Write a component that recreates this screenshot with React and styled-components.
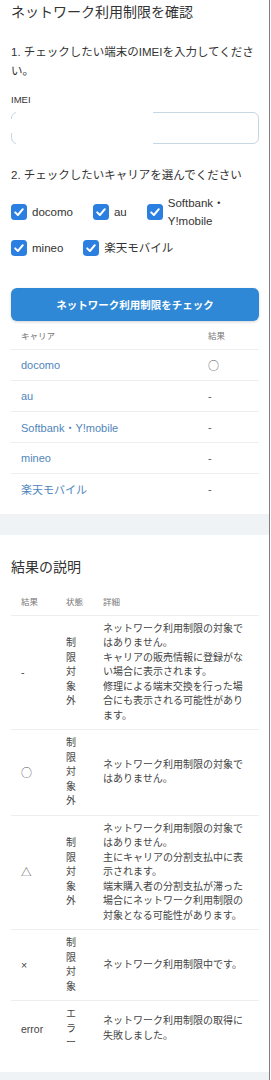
import React from 'react';
import styled, { createGlobalStyle } from 'styled-components';

const GlobalStyle = createGlobalStyle`
  html, body { margin: 0; padding: 0; background: #fff; }
  body {
    font-family: "Liberation Sans", "Noto Sans CJK JP", sans-serif;
    color: #333;
  }
  * { box-sizing: border-box; }
`;

const Page = styled.div`
  width: 270px;
  min-height: 1080px;
  border-right: 1px solid #7f7f7f;
  background: #f0f3f5;
  display: flex;
  flex-direction: column;
  gap: 21px;
`;

const Card = styled.section`
  background: #fff;
  padding: ${(p) => p.$top}px 10px ${(p) => p.$bottom}px 11px;
`;

const Title = styled.h2`
  margin: 0;
  font-size: 14px;
  line-height: 20px;
  font-weight: 400;
  color: #333;
`;

const Prompt = styled.p`
  margin: ${(p) => p.$mt}px 0 0;
  font-size: 11.5px;
  line-height: 19px;
  color: #333;
`;

const FieldLabel = styled.label`
  display: block;
  margin-top: 12px;
  font-size: 9.5px;
  line-height: 14px;
  color: #333;
`;

const InputWrap = styled.div`
  position: relative;
  margin-top: 5px;
  height: 32px;
`;

const TextInput = styled.input`
  display: block;
  width: 100%;
  height: 32px;
  border: 1px solid #c8d5e2;
  border-radius: 6px;
  background: #fff;
  padding: 0 10px;
  font: inherit;
  outline: none;
`;

const EdgeMask = styled.span`
  position: absolute;
  background: #fff;
  pointer-events: none;
  ${(p) => p.$edge === 'side'
    ? 'left: -1px; top: 7px; width: 3px; height: 14px;'
    : 'left: 5px; top: -1px; width: 137px; height: 34px;'}
`;

const CarrierGroup = styled.div`
  display: flex;
  flex-wrap: wrap;
  align-items: center;
  column-gap: 20px;
  row-gap: 9px;
  margin-top: 9px;
`;

const Option = styled.label`
  display: flex;
  align-items: center;
  gap: 5px;
  font-size: 11.5px;
  line-height: 18px;
  color: #333;
  max-width: ${(p) => (p.$narrow ? '104px' : 'none')};
`;

const Box = styled.svg`
  flex: 0 0 16px;
  width: 16px;
  height: 16px;
`;

const CheckButton = styled.button`
  display: block;
  width: 100%;
  height: 33px;
  margin-top: 31px;
  border: none;
  border-radius: 6px;
  background: #2e88d5;
  color: #fff;
  font-family: inherit;
  font-size: 10.5px;
  font-weight: 700;
  box-shadow: 0 1px 3px rgba(0, 0, 0, 0.18);
`;

const Table = styled.table`
  width: 100%;
  border-collapse: collapse;
  table-layout: fixed;
  margin-top: ${(p) => p.$mt || 0}px;
`;

const Th = styled.th`
  height: 28px;
  padding: 0 10px;
  text-align: left;
  font-size: 8.5px;
  font-weight: 400;
  color: #777;
  border-bottom: 1px solid #eee;
  width: ${(p) => (p.$w ? `${p.$w}px` : 'auto')};
`;

const CarrierRow = styled.tr`
  & + & td { border-top: 1px solid #eee; }
`;

const Td = styled.td`
  height: 31px;
  padding: 0 10px;
  font-size: 11px;
  color: ${(p) => (p.$link ? '#4f86bd' : '#555')};
  white-space: nowrap;
`;

const Symbol = styled.span`
  font-family: "Noto Sans CJK JP", sans-serif;
  font-size: ${(p) => p.$size || 11}px;
  color: #555;
`;

const LegendRow = styled.tr`
  & + & td { border-top: 1px solid #eee; }
`;

const LegendCell = styled.td`
  padding: 6px ${(p) => (p.$kind === 'detail' ? 12 : 10)}px 6px 10px;
  vertical-align: middle;
  font-size: ${(p) => (p.$kind === 'result' ? '10.5px' : '10px')};
  line-height: 14.5px;
  color: #444;
  ${(p) => p.$kind === 'status' ? 'line-break: anywhere; word-break: break-all;' : ''}
`;

const CheckIcon = () => (
  <Box viewBox="0 0 16 16" aria-hidden="true">
    <rect x="0" y="0" width="16" height="16" rx="3.5" fill="#2b7fe0" />
    <path d="M4.2 8.4 L6.9 11 L11.8 5.2" fill="none" stroke="#fff" strokeWidth="2" strokeLinecap="round" strokeLinejoin="round" />
  </Box>
);

const carriers = [
  { name: 'docomo', result: '○' },
  { name: 'au', result: '-' },
  { name: 'Softbank・Y!mobile', result: '-' },
  { name: 'mineo', result: '-' },
  { name: '楽天モバイル', result: '-' },
];

const legend = [
  { mark: '-', status: '制限対象外', detail: 'ネットワーク利用制限の対象ではありません。キャリアの販売情報に登録がない場合に表示されます。修理による端末交換を行った場合にも表示される可能性があります。' },
  { mark: '○', status: '制限対象外', detail: 'ネットワーク利用制限の対象ではありません。' },
  { mark: '△', status: '制限対象外', detail: 'ネットワーク利用制限の対象ではありません。主にキャリアの分割支払中に表示されます。端末購入者の分割支払が滞った場合にネットワーク利用制限の対象となる可能性があります。' },
  { mark: '×', status: '制限対象', detail: 'ネットワーク利用制限中です。' },
  { mark: 'error', status: 'エラー', detail: 'ネットワーク利用制限の取得に失敗しました。' },
];

const renderDetail = (text) => {
  const parts = text.split('。').filter(Boolean);
  return parts.map((s, i) => (
    <React.Fragment key={i}>
      {s}。{i < parts.length - 1 && <br />}
    </React.Fragment>
  ));
};

const renderMark = (mark) => {
  if (mark === '○') return <Symbol $size={11}>○</Symbol>;
  if (mark === '△') return <Symbol $size={10.5}>△</Symbol>;
  return mark;
};

export default function App() {
  return (
    <>
      <GlobalStyle />
      <Page>
        <Card $top={2} $bottom={10}>
          <Title>ネットワーク利用制限を確認</Title>
          <Prompt $mt={21}>1. チェックしたい端末のIMEIを入力してください。</Prompt>
          <FieldLabel htmlFor="imei">IMEI</FieldLabel>
          <InputWrap>
            <TextInput id="imei" type="text" />
            <EdgeMask />
            <EdgeMask $edge="side" />
          </InputWrap>
          <Prompt $mt={22}>2. チェックしたいキャリアを選んでください</Prompt>
          <CarrierGroup>
            <Option><CheckIcon />docomo</Option>
            <Option><CheckIcon />au</Option>
            <Option $narrow><CheckIcon /><span>Softbank・<wbr />Y!mobile</span></Option>
            <Option><CheckIcon />mineo</Option>
            <Option><CheckIcon />楽天モバイル</Option>
          </CarrierGroup>
          <CheckButton type="button">ネットワーク利用制限をチェック</CheckButton>
          <Table>
            <thead>
              <tr>
                <Th>キャリア</Th>
                <Th $w={61}>結果</Th>
              </tr>
            </thead>
            <tbody>
              {carriers.map((c) => (
                <CarrierRow key={c.name}>
                  <Td $link>{c.name}</Td>
                  <Td>{renderMark(c.result)}</Td>
                </CarrierRow>
              ))}
            </tbody>
          </Table>
        </Card>
        <Card $top={22} $bottom={15}>
          <Title>結果の説明</Title>
          <Table $mt={10}>
            <thead>
              <tr>
                <Th $w={45}>結果</Th>
                <Th $w={37}>状態</Th>
                <Th>詳細</Th>
              </tr>
            </thead>
            <tbody>
              {legend.map((r) => (
                <LegendRow key={r.mark}>
                  <LegendCell $kind="result">{renderMark(r.mark)}</LegendCell>
                  <LegendCell $kind="status">{r.status}</LegendCell>
                  <LegendCell $kind="detail">{renderDetail(r.detail)}</LegendCell>
                </LegendRow>
              ))}
            </tbody>
          </Table>
        </Card>
      </Page>
    </>
  );
}
